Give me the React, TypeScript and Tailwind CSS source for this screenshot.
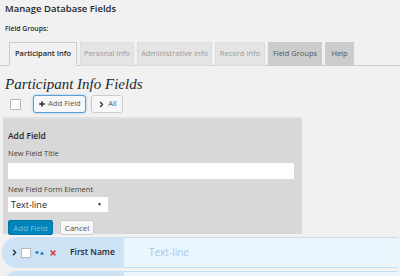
import { Plus, ChevronRight, X } from 'lucide-react';

const tabs = [
  { label: 'Participant Info', w: 'w-[68px]', kind: 'active' },
  { label: 'Personal Info', w: 'w-[54px]', kind: 'light' },
  { label: 'Administrative Info', w: 'w-[75px]', kind: 'light' },
  { label: 'Record Info', w: 'w-[50px]', kind: 'light' },
  { label: 'Field Groups', w: 'w-[54px]', kind: 'dark' },
  { label: 'Help', w: 'w-[29px]', kind: 'dark' },
];

const tabClass = (kind: string) => {
  if (kind === 'active') return 'bg-[#f1f1f1] border-[#ccc] border-b-[#f1f1f1] text-[#23282d] font-semibold';
  if (kind === 'dark') return 'bg-[#cccccc] border-[#ccc] text-[#555]';
  return 'bg-[#e4e4e4] border-[#ddd] text-[#9a9a9a]';
};

const SortArrows = () => (
  <svg width="9" height="6" viewBox="0 0 9 6" className="shrink-0">
    <path d="M0 1.5h4L2 4.5z" fill="#0073aa" />
    <path d="M5 4.5h4L7 1.5z" fill="#0073aa" />
  </svg>
);

const FieldRow = ({ name, type }: { name: string; type: string }) => (
  <div className="flex h-[31px] mx-[2px]">
    <div className="flex items-center w-[122px] bg-[#cde3f5] rounded-l-[15px] pl-[8px] whitespace-nowrap">
      <ChevronRight size={9} strokeWidth={3.5} className="text-[#23282d] shrink-0" />
      <span className="ml-[2px] w-[10px] h-[10px] bg-white border border-[#b4b9be] shrink-0" />
      <span className="ml-[4px] flex"><SortArrows /></span>
      <X size={8} strokeWidth={4} className="ml-[5px] text-[#dc3232] shrink-0" />
      <span className="ml-[13px] text-[8.5px] font-semibold text-[#23282d]">{name}</span>
    </div>
    <div className="flex-1 flex items-center bg-[#eaf6fd] border-y border-[#c5def2] pl-[25px] text-[10px] text-[#a9c7e2]">
      {type}
    </div>
  </div>
);

export default function App() {
  return (
    <div className="w-[400px] h-[276px] overflow-hidden bg-[#f1f1f1] font-['Open_Sans',sans-serif] text-[#23282d]">
      <div className="pl-[5px] pt-[1px] text-[9.5px] font-semibold leading-[16px]">Manage Database Fields</div>
      <div className="pl-[5px] mt-[6px] text-[6.8px] font-semibold leading-[12px]">Field Groups:</div>

      <div className="flex gap-[3px] pl-[9px] mt-[7px] border-b border-[#ccc]">
        {tabs.map((t) => (
          <div
            key={t.label}
            className={`${t.w} h-[24px] -mb-px flex items-center justify-center border text-[7.5px] whitespace-nowrap ${tabClass(t.kind)}`}
          >
            {t.label}
          </div>
        ))}
      </div>

      <div className="pl-[5px] mt-[8px] font-['Liberation_Serif',serif] italic text-[15px] leading-[20px] text-[#23282d]">
        Participant Info Fields
      </div>

      <div className="flex items-center mt-[1px] h-[18px]">
        <span className="ml-[10px] w-[11px] h-[11px] bg-white border border-[#b4b9be] rounded-[1px]" />
        <button className="ml-[12px] h-[18px] w-[53px] flex items-center justify-center gap-[2px] bg-[#f7f7f7] border border-[#5b9dd9] rounded-[3px] text-[7.5px] text-[#555] shadow-[0_0_2px_rgba(30,140,190,0.6)]">
          <Plus size={8} strokeWidth={4} className="text-[#23282d]" />
          Add Field
        </button>
        <button className="ml-[5px] h-[18px] w-[32px] flex items-center justify-center gap-[2px] bg-[#f7f7f7] border border-[#ccc] rounded-[3px] text-[7.5px] text-[#555]">
          <ChevronRight size={9} strokeWidth={3} className="text-[#23282d]" />
          All
        </button>
      </div>

      <div className="mt-[4px] ml-[3px] w-[299px] h-[117px] bg-[#d8d8d8] border-t-2 border-[#e0e0e0] px-[5px] pt-[10px]">
        <div className="text-[8.5px] font-semibold leading-[14px]">Add Field</div>
        <div className="mt-[5px] text-[7.5px] text-[#444] leading-[10px]">New Field Title</div>
        <div className="mt-[5px] w-[286px] h-[16px] bg-white" />
        <div className="mt-[5px] text-[7.5px] text-[#444] leading-[10px]">New Field Form Element</div>
        <div className="mt-[3px] w-[100px] h-[15px] bg-white flex items-center justify-between px-[3px] text-[9px]">
          <span>Text-line</span>
          <span className="text-[5px] mr-[3px]">▼</span>
        </div>
        <div className="flex mt-[8px] gap-[7px]">
          <button className="h-[15px] w-[45px] bg-[#0085ba] border border-[#0073aa] rounded-[2px] text-[8px] text-[#7fc0dc]">Add Field</button>
          <button className="h-[15px] w-[34px] bg-[#f7f7f7] border border-[#ccc] rounded-[2px] text-[8px] text-[#555]">Cancel</button>
        </div>
      </div>

      <div className="mt-[3px] flex flex-col gap-[3px]">
        <FieldRow name="First Name" type="Text-line" />
        <FieldRow name="Last Name" type="Text-line" />
      </div>
    </div>
  );
}
